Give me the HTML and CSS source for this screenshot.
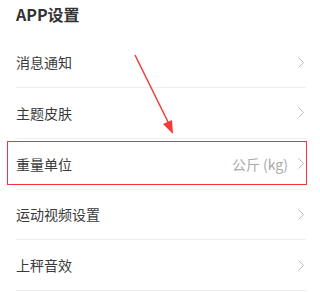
FILE: index.html
```html
<!DOCTYPE html>
<html lang="zh-CN">
<head>
  <meta charset="UTF-8" />
  <meta name="viewport" content="width=device-width, initial-scale=1.0"/>
  <title>APP设置</title>
  <link rel="stylesheet" href="styles.css">
</head>
<body>
  <div class="page">
    <h2 class="section-title">APP设置</h2>

    <ul class="settings">
      <li class="row">
        <span class="label">消息通知</span>
        <svg class="chevron" width="6" height="11" viewBox="0 0 6 11"><polyline points="0.5,0.5 5.5,5.5 0.5,10.5" /></svg>
      </li>
      <li class="row">
        <span class="label">主题皮肤</span>
        <svg class="chevron" width="6" height="11" viewBox="0 0 6 11"><polyline points="0.5,0.5 5.5,5.5 0.5,10.5" /></svg>
      </li>
      <li class="row">
        <span class="label">重量单位</span>
        <span class="value">公斤 (kg)</span>
        <svg class="chevron" width="6" height="11" viewBox="0 0 6 11"><polyline points="0.5,0.5 5.5,5.5 0.5,10.5" /></svg>
      </li>
      <li class="row">
        <span class="label">运动视频设置</span>
        <svg class="chevron" width="6" height="11" viewBox="0 0 6 11"><polyline points="0.5,0.5 5.5,5.5 0.5,10.5" /></svg>
      </li>
      <li class="row">
        <span class="label">上秤音效</span>
        <svg class="chevron" width="6" height="11" viewBox="0 0 6 11"><polyline points="0.5,0.5 5.5,5.5 0.5,10.5" /></svg>
      </li>
    </ul>

    <!-- annotation overlay -->
    <div class="highlight"></div>
    <svg class="arrow" width="320" height="292" viewBox="0 0 320 292">
      <line x1="135" y1="55" x2="168" y2="122" stroke="#f23a3a" stroke-width="1.5" />
      <polygon points="173,134 163,124 172,120" fill="#f23a3a" />
    </svg>
  </div>
</body>
</html>
```

FILE: styles.css
```css
body {
  margin: 0;
  background: #fff;
  font-family: "Noto Sans CJK SC", "Noto Sans", sans-serif;
  color: #333;
}

.page {
  position: relative;
  width: 320px;
  height: 292px;
  overflow: hidden;
}

.section-title {
  margin: 0;
  padding: 3px 16px 0;
  height: 34.25px;
  font-size: 16px;
  font-weight: bold;
  line-height: 22px;
  color: #333;
}

.settings {
  list-style: none;
  margin: 0 14px 0 16px;
  padding: 0;
}

.row {
  display: flex;
  align-items: center;
  height: 49.75px;
  border-bottom: 1px solid #eeeeee;
  padding-right: 2px;
}

.label {
  flex: 1;
  font-size: 14px;
  color: #3a3a3a;
}

.value {
  font-size: 14px;
  color: #aaa;
  margin-right: 10px;
}

.chevron {
  fill: none;
  stroke: #bbb;
  stroke-width: 1;
}

.highlight {
  position: absolute;
  left: 7px;
  top: 141px;
  width: 298px;
  height: 42px;
  border: 1.5px solid #f5333f;
}

.arrow {
  position: absolute;
  left: 0;
  top: 0;
}
```
